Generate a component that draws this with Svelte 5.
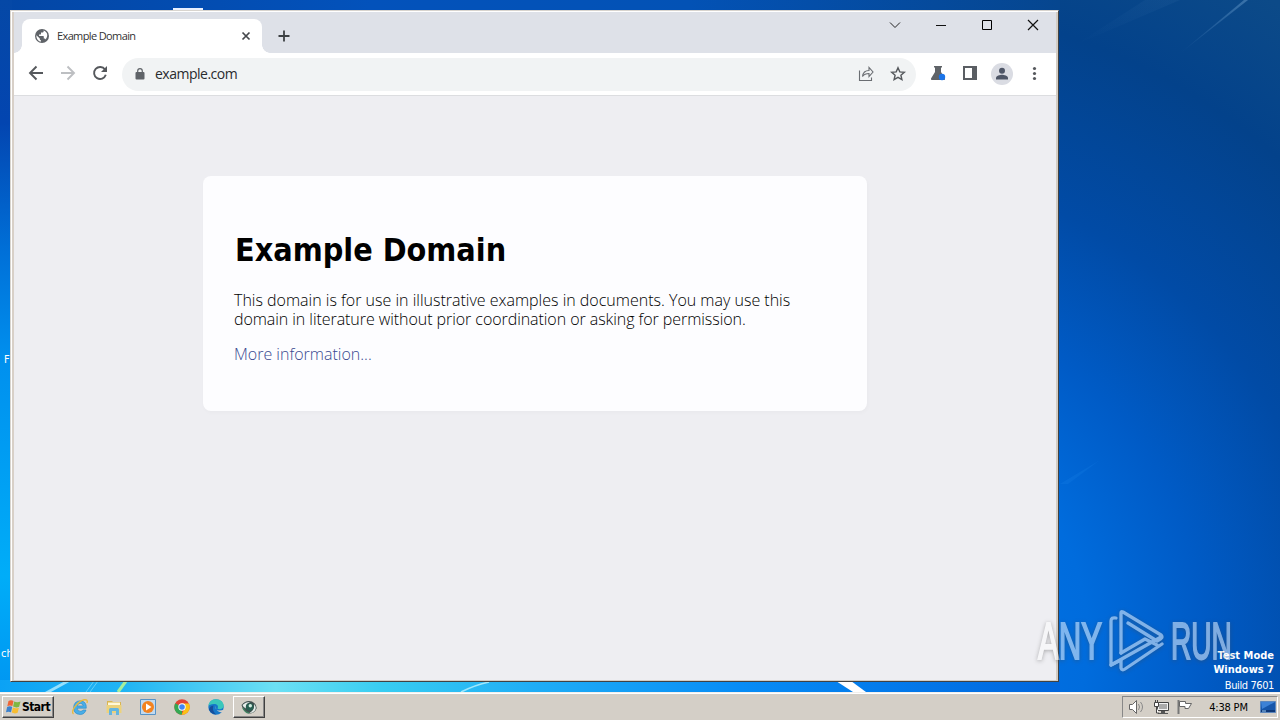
<script>
  const url = "example.com";
  const title = "Example Domain";
</script>

<div class="desktop">
  <svg class="wallpaper" width="1280" height="720" viewBox="0 0 1280 720">
    <defs>
      <linearGradient id="left" x1="0" y1="0" x2="0" y2="1">
        <stop offset="0" stop-color="#0548a6" />
        <stop offset=".17" stop-color="#0345b0" />
        <stop offset=".35" stop-color="#0070d8" />
        <stop offset=".5" stop-color="#0090ee" />
        <stop offset=".8" stop-color="#00adf8" />
        <stop offset="1" stop-color="#0090f0" />
      </linearGradient>
      <radialGradient id="right" gradientUnits="userSpaceOnUse" cx="860" cy="640" r="760">
        <stop offset="0" stop-color="#0079ef" />
        <stop offset=".3" stop-color="#006cdd" />
        <stop offset=".45" stop-color="#005bc6" />
        <stop offset=".62" stop-color="#014ba6" />
        <stop offset=".84" stop-color="#03428b" />
        <stop offset="1" stop-color="#0c4a88" />
      </radialGradient>
      <linearGradient id="top">
        <stop offset="0" stop-color="#0346a5" />
        <stop offset=".35" stop-color="#0352bb" />
        <stop offset=".65" stop-color="#0352b5" />
        <stop offset="1" stop-color="#06468f" />
      </linearGradient>
      <linearGradient id="bottom">
        <stop offset="0" stop-color="#0ba2f5" />
        <stop offset=".12" stop-color="#22b5f3" />
        <stop offset=".26" stop-color="#6ce0f3" />
        <stop offset=".36" stop-color="#38cdf1" />
        <stop offset=".5" stop-color="#20aef5" />
        <stop offset=".7" stop-color="#078cf5" />
        <stop offset="1" stop-color="#0066de" />
      </linearGradient>
      <linearGradient id="ray" x1="1" y1="0" x2="0" y2="1">
        <stop offset="0" stop-color="#7fb0dc" stop-opacity=".4" />
        <stop offset="1" stop-color="#7fb0dc" stop-opacity="0" />
      </linearGradient>
    </defs>
    <rect width="1280" height="720" fill="url(#right)" />
    <rect width="1060" height="12" fill="url(#top)" />
    <rect width="12" height="720" fill="url(#left)" />
    <rect y="680" width="1060" height="14" fill="url(#bottom)" />
    <path d="M1244 0h4l-70 55z" fill="url(#ray)" />
    <path d="M1145 0h35l-105 45z" fill="url(#ray)" opacity=".15" />
    <path d="M1060 484l40-24-32 24z" fill="#2b91f0" opacity=".15" />
    <path d="M45 692l20-11h6l-20 11z" fill="#b5edff" opacity=".8" />
    <path d="M86 692l8-11M90 692l8-11" stroke="#a9edff" opacity=".5" />
    <path d="M118 692l8-11" stroke="#a7ef9c" stroke-width="3" />
    <path d="M461 692q14-7 28-10" stroke="#a0e7fb" stroke-width="1.500" fill="none" />
    <path d="M836 681h15l15 11h-13z" fill="#fff" />
    <path d="M173 8h30v2h-30zM25 10h22v2H25z" fill="#e8f0ff" />
  </svg>
  <span class="shortcut firefox">F</span>
  <span class="shortcut chrome">ch</span>

  <div class="window">
    <header class="tabstrip">
      <div class="tab">
        <svg width="14" height="14" viewBox="0 0 14 14">
          <circle cx="7" cy="7" r="7" fill="#5f6368" />
          <path d="M1.400 6.200l3.400 3.200v1.100l1.200 1v1.100C3 12.200 1.200 9.500 1.400 6.200zM8.600 1.600v.8c0 .7-.6 1.200-1.300 1.200H6v1.300c0 .4-.3.700-.7.700H4.100v1.300h4c.4 0 .7.300.7.700v2h.6c.6 0 1 .4 1.200.9 2.600-2.800 2.400-7.300-2-8.900z" fill="#fff" />
        </svg>
        <span class="tab-title">{title}</span>
        <svg width="10" height="10" viewBox="0 0 10 10">
          <path d="M1.500 1.500l7 7m0-7l-7 7" stroke="#45484c" stroke-width="1.700" />
        </svg>
      </div>
      <svg class="new-tab" width="12" height="12" viewBox="0 0 12 12">
        <path d="M6 .5v11M.5 6h11" stroke="#3c4043" stroke-width="1.800" />
      </svg>
      <div class="caption">
        <svg width="46" height="30" viewBox="0 0 46 30"><path d="M18 12.500l5 5 5-5" fill="none" stroke="#222" /></svg>
        <svg width="46" height="30" viewBox="0 0 46 30"><path d="M18 15.500h10" stroke="#111" /></svg>
        <svg width="46" height="30" viewBox="0 0 46 30"><path d="M18.500 10.500h9v9h-9z" fill="none" stroke="#000" /></svg>
        <svg width="46" height="30" viewBox="0 0 46 30"><path d="M18 10l10 10m0-10L18 20" stroke="#111" stroke-width="1.200" /></svg>
      </div>
    </header>

    <nav class="toolbar">
      <svg width="32" height="32" viewBox="0 0 32 32"><path d="M23 15H10m6.500-6.500L10 15l6.500 6.500" fill="none" stroke="#55585c" stroke-width="1.900" /></svg>
      <svg width="32" height="32" viewBox="0 0 32 32"><path d="M9 15h13m-6.500-6.500L22 15l-6.500 6.500" fill="none" stroke="#bdbfc2" stroke-width="1.900" /></svg>
      <svg width="32" height="32" viewBox="0 0 32 32"><path d="M21 11.500a6 6 0 1 0 .8 5.300" fill="none" stroke="#55585c" stroke-width="1.900" /><path d="M23 8v6h-6z" fill="#55585c" /></svg>
      <div class="omnibox">
        <svg width="10" height="12" viewBox="0 0 10 12">
          <rect x=".5" y="4" width="9" height="7.500" rx="1" fill="#5f6368" />
          <path d="M2.700 4.500V3a2.300 2.300 0 0 1 4.600 0v1.500" fill="none" stroke="#5f6368" stroke-width="1.200" />
        </svg>
        <span class="url">{url}</span>
        <svg width="32" height="32" viewBox="0 0 32 32">
          <path d="M9.500 12.500v10h12v-3M12.500 18.500c.5-4 3-6 6.500-6v-3l4 4.500-4 4.500v-3c-3 0-5 .8-6.500 3z" fill="none" stroke="#6a6d72" stroke-width="1.100" />
        </svg>
        <svg width="32" height="32" viewBox="0 0 32 32">
          <path d="M16 9.800l1.800 4.100 4.500.4-3.400 2.900 1 4.400-3.900-2.300-3.900 2.300 1-4.400-3.400-2.900 4.500-.4z" fill="none" stroke="#55585c" stroke-width="1.400" />
        </svg>
      </div>
      <svg width="32" height="32" viewBox="0 0 32 32">
        <path d="M12 8h8v1.500h-1V14l4 6.500q.4 1.500-1 1.500H10q-1.400 0-1-1.500l4-6.500V9.500h-1z" fill="#5f6368" />
        <circle cx="20" cy="19" r="3.200" fill="#1a73e8" />
      </svg>
      <svg width="32" height="32" viewBox="0 0 32 32">
        <path d="M9 8h14v14H9zm2 2v10h7V10z" fill="#5a5e63" fill-rule="evenodd" />
      </svg>
      <svg width="32" height="32" viewBox="0 0 32 32">
        <circle cx="16" cy="16" r="11" fill="#dadce3" />
        <circle cx="16" cy="12.800" r="3" fill="#4d5566" />
        <path d="M10 21.500V20c0-2.200 4-3.300 6-3.300s6 1.100 6 3.300v1.500z" fill="#4d5566" />
      </svg>
      <svg width="32" height="32" viewBox="0 0 32 32" fill="#55585c">
        <circle cx="16.500" cy="10.500" r="1.600" /><circle cx="16.500" cy="15.500" r="1.600" /><circle cx="16.500" cy="20.500" r="1.600" />
      </svg>
    </nav>

    <main>
      <article>
        <h1>{title}</h1>
        <p>
          <span class="line">This domain is for use in illustrative examples in documents. You may use this</span>
          <span class="line second">domain in literature without prior coordination or asking for permission.</span>
        </p>
        <p><a href="https://www.iana.org/domains/example">More information...</a></p>
      </article>
    </main>
  </div>

  <div class="build">
    <b>Test Mode</b>
    <b>Windows 7</b>
    <span>Build 7601</span>
  </div>

  <div class="watermark">
    <span class="any">ANY</span>
    <svg width="56" height="64" viewBox="0 0 56 64" fill="none" stroke="#fff" stroke-width="3.300" stroke-linejoin="round" stroke-linecap="round">
      <path d="M12 44V4q0-2 2-1l38 23q2 2 0 3.500L48 32 19 14" />
      <path d="M7 9q-5-1-5 3v44l50-28" />
      <path d="M12 44l24-14 12 6M2 56l10-5v8q1 3 4 1l37-25" />
    </svg>
    <span class="run">RUN</span>
  </div>

  <footer class="taskbar">
    <button class="start">
      <svg width="15" height="14" viewBox="0 0 15 14">
        <path d="M2.500 1Q5-.500 7.500 1L6.400 6.100Q4 5 1.300 6.200z" fill="#ee6535" />
        <path d="M8.200 1.500Q11 3 14.500 1.500l-1.400 5.300q-3 1.300-6-.2z" fill="#7fb742" />
        <path d="M1.100 7Q4 5.700 6.200 7L5 12.300q-2.500-1.300-5 0z" fill="#3c82cd" />
        <path d="M6.900 7.500q2.700 1.500 6 .2l-1.300 5q-2.900 1.500-5.800-.1z" fill="#f7bd32" />
      </svg>
      Start
    </button>
    <div class="quick">
      <svg width="18" height="18" viewBox="0 0 18 18">
        <path d="M15.300 10.200H6.200q.2 3.100 3.200 3.100 2 0 2.700-1.300H15Q13.500 16.500 9.200 16.500q-6.600-.4-6.600-6.800Q3 3 9.200 2.800q6.500.3 6.100 7.400zM6.200 7.900h6Q12 5.400 9.300 5.400T6.200 7.900z" fill="#48aee8" stroke="#2586c6" stroke-width=".6" />
        <path d="M2.500 16C-1 13.500 6.500 3.500 13 1.800q4.300-.7 3 3.200" fill="none" stroke="#e7b93e" stroke-width="1.400" />
      </svg>
      <svg width="18" height="18" viewBox="0 0 18 18">
        <path d="M2 3h5l1 1h8v9H2z" fill="#d9b552" />
        <path d="M3 4.500h12V8H3z" fill="#fff8d8" /><path d="M1.500 7h15v8h-15z" fill="#ecd27c" />
        <path d="M4 17v-5.500q0-1.500 1.500-1.500h7q1.500 0 1.500 1.500V17h-3v-4H7v4z" fill="#65b5df" />
      </svg>
      <svg width="18" height="18" viewBox="0 0 18 18">
        <path d="M1.500 1.500h15v15h-15z" fill="#c2daef" stroke="#5793c6" />
        <circle cx="9" cy="9" r="6" fill="#f38320" /><path d="M7 5.500L12.500 9 7 12.500z" fill="#fff" />
      </svg>
      <svg width="18" height="18" viewBox="0 0 18 18">
        <circle cx="9" cy="9" r="7.700" fill="#e34335" />
        <path d="M9 9L2.300 5.200A7.700 7.700 0 0 0 9 16.700z" fill="#34a853" />
        <path d="M9 5.500h6.900A7.700 7.700 0 0 1 8.500 16.700L12 10z" fill="#fbc116" />
        <circle cx="9" cy="9" r="3.700" fill="#fff" /><circle cx="9" cy="9" r="2.800" fill="#4285f4" />
      </svg>
      <svg width="18" height="18" viewBox="0 0 18 18">
        <circle cx="9" cy="9" r="7.700" fill="#1678c9" />
        <path d="M1.500 8C2 3 5.500 1.300 9 1.300c5 0 7.700 3.500 7.700 6.400 0 3-4 4.300-6.200 2.800C12 8 10 6 7 6 4 6 2 7 1.500 8z" fill="#3ac8bb" />
        <path d="M9 8c-1.500 4 2.500 6 8.500 3.500l-1 3C13 14.500 8 13 9 8z" fill="#d4cfc7" />
        <path d="M6.500 7.500q-2 5 2.500 9-5-.5-7-5 .5-3.500 4.500-4z" fill="#174f9c" />
      </svg>
    </div>
    <button class="running" aria-label="Running application">
      <svg width="16" height="16" viewBox="0 0 16 16">
        <path d="M.500 6Q5 .500 11 2.500q5 2.500 4.500 7-2 5-7 5Q2 12.500.500 6z" fill="#40504f" />
        <path d="M1.500 6Q5 2.500 9 3 4 5 5 9.500 2.500 9 1.500 6zM13 5q3 3 1 6.500-2.500 3-5.500 2.500Q14 11 13 5z" fill="#e6eeea" />
        <circle cx="8.700" cy="8" r="3.800" fill="#285f51" /><circle cx="9.300" cy="6.700" r="1.700" fill="#d4eee2" />
        <path d="M2 9q2 4.500 6 5" stroke="#3f8060" stroke-width="1.500" fill="none" />
      </svg>
    </button>
    <div class="tray">
      <svg width="18" height="16" viewBox="0 0 18 16" fill="none" stroke="#666">
        <path d="M1.500 5.500h3l4-4v13l-4-4h-3z" fill="#fff" /><path d="M10.500 5q2 3 0 6M12.500 3q4 5 0 10" stroke="#888" />
      </svg>
      <svg width="17" height="16" viewBox="0 0 17 16">
        <path d="M4.500 3.500h11v8h-11z" fill="#f2f2f2" stroke="#444" /><path d="M6 5h8v5H6z" fill="#aaa" />
        <path d="M8 12h4v2h3v1H5v-1h3z" fill="#555" /><path d="M1.500 3.500h4v4h-4zM2.500 1v2m2-2v2M3.500 8v6H6" fill="#fff" stroke="#444" />
      </svg>
      <svg width="17" height="16" viewBox="0 0 17 16">
        <path d="M1.500 1v14" stroke="#777" stroke-width="2" /><path d="M2.500 2.500h6v2h6l-3 5H8v-2H2.500z" fill="#fff" stroke="#666" />
      </svg>
      <span class="clock">4:38 PM</span>
      <svg width="16" height="12" viewBox="0 0 16 12">
        <path d="M.5.5h15v11H.5z" fill="#1656aa" stroke="#5c87bd" /><path d="M1 1h14L2 8z" fill="#3d82d6" /><path d="M1 9h14v2H1z" fill="#0d3777" /><path d="M2 10h4" stroke="#9fd4ff" />
      </svg>
    </div>
  </footer>
</div>

<style>
  .desktop {
    position: relative;
    width: 1280px;
    height: 720px;
    overflow: hidden;
    font-family: "DejaVu Sans Condensed", "DejaVu Sans", sans-serif;
    font-size: 11px;
  }
  svg {
    display: block;
    flex: none;
  }
  .wallpaper {
    position: absolute;
  }
  .shortcut {
    position: absolute;
    color: #fff;
    left: 4px;
    top: 353px;
  }
  .chrome {
    left: 1px;
    top: 647px;
  }
  .window {
    position: absolute;
    left: 10px;
    top: 10px;
    width: 1049px;
    height: 672px;
    box-sizing: border-box;
    display: flex;
    flex-direction: column;
    border: 1px solid;
    border-color: #d8d4ce #424242 #424242 #d8d4ce;
    box-shadow: inset 1px 1px #fff, inset -2px -1px #d3cdc5, inset 3px 0 #d8d0c8;
    padding: 1px 2px 1px 3px;
  }
  .tabstrip {
    height: 41px;
    background: #dee1e8;
    display: flex;
    padding-left: 8px;
  }
  .tab {
    position: relative;
    width: 240px;
    height: 34px;
    margin-top: 7px;
    box-sizing: border-box;
    padding: 0 11px 0 13px;
    background: #fff;
    border-radius: 8px 8px 0 0;
    display: flex;
    align-items: center;
    gap: 8px;
  }
  /* the curved feet of the active tab */
  .tab::before,
  .tab::after {
    content: "";
    position: absolute;
    bottom: 0;
    left: -8px;
    width: 8px;
    height: 8px;
    background: radial-gradient(circle at 0 0, transparent 7.5px, #fff 8px);
  }
  .tab::after {
    left: auto;
    right: -8px;
    background: radial-gradient(circle at 100% 0, transparent 7.5px, #fff 8px);
  }
  .tab-title {
    flex: 1;
    padding-bottom: 1px;
    font-family: "Open Sans", sans-serif;
    font-size: 11px;
    letter-spacing: -0.62px;
    color: #333;
  }
  .new-tab {
    margin: 18px 0 0 16px;
  }
  .caption {
    display: flex;
    margin-left: auto;
    margin-top: -2px;
  }
  .toolbar {
    height: 42px;
    background: #fff;
    border-bottom: 1px solid #dcdde0;
    display: flex;
    align-items: center;
    padding: 0 6px;
  }
  .omnibox {
    flex: 1;
    height: 33px;
    margin: 0 6px;
    padding: 0 2px 0 13px;
    background: #f1f3f4;
    border-radius: 17px;
    display: flex;
    align-items: center;
  }
  .url {
    flex: 1;
    margin-left: 10px;
    padding-bottom: 2px;
    font-family: "Open Sans", sans-serif;
    font-size: 14px;
    letter-spacing: -0.5px;
    color: #292b2e;
  }
  main {
    flex: 1;
    background: #eeeef2;
    padding-top: 80px;
  }
  article {
    width: 664px;
    height: 235px;
    box-sizing: border-box;
    margin: 0 auto;
    padding: 52px 31px;
    background: #fdfdff;
    border-radius: 8px;
    box-shadow: 1px 2px 4px rgba(0, 0, 0, 0.025);
    color: #000;
    font-family: "Open Sans", sans-serif;
    font-size: 16px;
    font-weight: 300;
    line-height: 19px;
    white-space: nowrap;
  }
  h1 {
    margin: 0 0 19px 1px;
    font-family: "DejaVu Sans Condensed", sans-serif;
    font-weight: 700;
    font-size: 32px;
    line-height: 44px;
  }
  p {
    margin: 0 0 16px;
  }
  .line {
    display: block;
  }
  .second {
    letter-spacing: -0.06px;
  }
  a {
    color: #38488f;
    text-decoration: none;
  }
  .build {
    position: absolute;
    right: 6px;
    top: 649px;
    color: #fff;
    display: flex;
    flex-direction: column;
    align-items: flex-end;
    line-height: 15px;
  }
  .build b {
    line-height: 14px;
  }
  .build span {
    margin-top: 1px;
    letter-spacing: -0.4px;
  }
  .watermark {
    position: absolute;
    left: 1038px;
    top: 609px;
    display: flex;
    align-items: center;
    opacity: 0.5;
    color: #fff;
    font-family: "Liberation Sans", sans-serif;
    font-size: 52px;
    filter: drop-shadow(0 1px 2px rgba(70, 70, 70, 0.8));
  }
  .watermark span {
    width: 65px;
    -webkit-text-stroke: 2px #fff;
    transform: scaleX(0.6);
    transform-origin: left;
  }
  .watermark .run {
    transform: scaleX(0.54);
  }
  .watermark svg {
    margin: 0 6px;
  }
  .taskbar {
    position: absolute;
    left: 0;
    right: 0;
    bottom: 0;
    height: 28px;
    box-sizing: border-box;
    border-top: 1px solid #f3f0ec;
    background: #d4cfc7;
    box-shadow: inset 0 1px #fff;
    display: flex;
    padding: 3px 2px 2px 2px;
  }
  button {
    font: bold 12px "DejaVu Sans Condensed", sans-serif;
    letter-spacing: -0.5px;
    color: #000;
    box-sizing: border-box;
    height: 22px;
    padding: 0;
    background: #d4cfc7;
    border: 1px solid;
    border-color: #fff #404040 #404040 #fff;
    box-shadow: inset -1px -1px #888;
    display: flex;
    align-items: center;
    justify-content: center;
    gap: 1px;
  }
  .start {
    width: 52px;
  }
  .quick {
    display: flex;
    align-items: center;
    gap: 16px;
    margin: 0 8px 0 17px;
  }
  .running {
    width: 32px;
  }
  .tray {
    margin-left: auto;
    width: 156px;
    height: 22px;
    box-sizing: border-box;
    border: 1px solid;
    border-color: #888 #fff #fff #888;
    display: flex;
    align-items: center;
    padding: 0 1px 0 5px;
    gap: 7px;
  }
  .clock {
    flex: 1;
    padding-left: 3px;
    text-align: center;
    white-space: nowrap;
    letter-spacing: -0.2px;
  }
</style>
